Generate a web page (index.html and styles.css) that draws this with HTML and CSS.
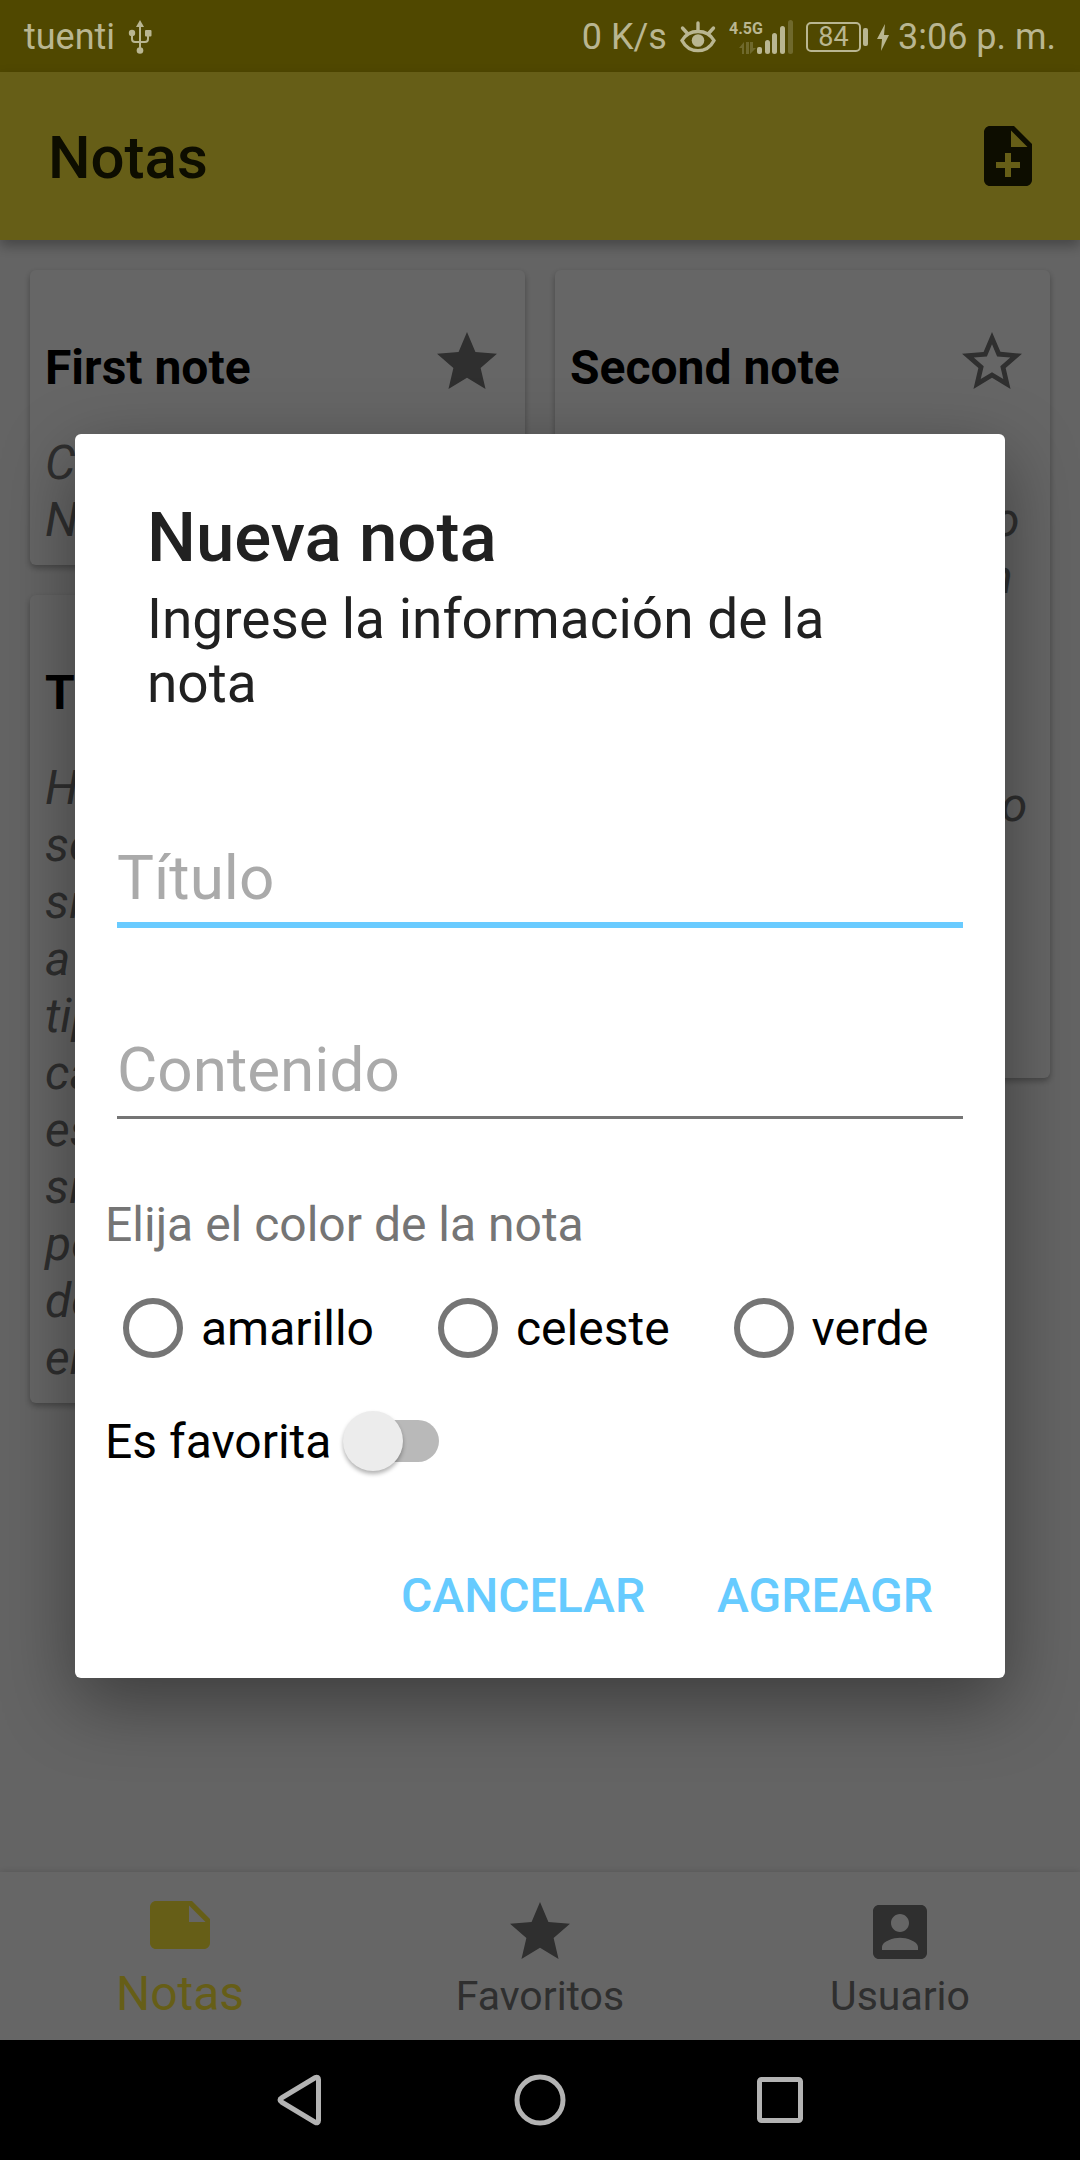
FILE: index.html
```html
<!DOCTYPE html>
<html lang="es">
<head>
<meta charset="utf-8">
<meta name="viewport" content="width=device-width, initial-scale=1">
<title>Notas</title>
<link rel="stylesheet" href="styles.css">
</head>
<body>
<div class="screen">
  <header class="status">
    <div class="status-group">
      <span>tuenti</span>
      <svg class="usb" viewBox="0 0 24 34" aria-hidden="true"><g fill="none" stroke="currentColor" stroke-width="2"><path d="M12 5v24M4 13v6c0 2 1 3 3 3h10c2 0 3-1 3-3v-6"/></g><path d="M12 0l4 7H8z"/><circle cx="4" cy="13" r="3.200"/><rect x="17" y="10" width="6.500" height="6.500" rx="1"/><circle cx="12" cy="30.500" r="3.300"/></svg>
    </div>
    <div class="status-group">
      <span>0 K/s</span>
      <svg class="eye" viewBox="0 0 36 32" aria-hidden="true"><g fill="none" stroke="currentColor" stroke-width="3.400" stroke-linecap="round"><path d="M2 19.500C9 7.500 27 7.500 34 19.500 27 33 9 33 2 19.500z"/><path d="M18 2v7M2.500 7l4.500 5M33.500 7L29 12"/></g><circle cx="18" cy="19.500" r="6.300"/></svg>
      <svg class="signal" viewBox="0 0 64 34" aria-hidden="true"><text x="0" y="14" class="signal-type">4.5G</text><g opacity=".3"><path d="M10 28l5-6v12h-2v-6zM17 22h3v12h-3zM21 22h3v6h3l-6 6z"/><rect x="59" y="0" width="5" height="34" rx="2.500"/></g><rect x="28" y="27" width="5" height="7" rx="2"/><rect x="36" y="20" width="5" height="14" rx="2.500"/><rect x="43" y="13" width="5" height="21" rx="2.500"/><rect x="51" y="6" width="5" height="28" rx="2.500"/></svg>
      <div class="power">
        <span class="battery"><span class="battery-body">84</span><span class="battery-tip"></span></span>
        <svg class="bolt" viewBox="0 0 12 27" aria-hidden="true"><path d="M8 0L0 15h5l-1 12 8-16H7z"/></svg>
        <span>3:06 p. m.</span>
      </div>
    </div>
  </header>

  <div class="app">
    <div class="appbar">
      <h1>Notas</h1>
      <button class="icon-button" type="button" aria-label="Agregar nota"><svg class="icon" viewBox="0 0 24 24"><path d="M14 2H6c-1.100 0-2 .9-2 2v16c0 1.100.9 2 2 2h12c1.100 0 2-.9 2-2V8l-6-6zm2 14h-3v3h-2v-3H8v-2h3v-3h2v3h3v2zm-3-7V3.500L18.500 9H13z"/></svg></button>
    </div>
    <main class="board">
      <div class="column">
        <article class="card">
          <div class="card-head"><h2>First note</h2><svg class="icon" viewBox="0 0 24 24"><path d="M12 17.270L18.180 21l-1.640-7.030L22 9.240l-7.190-.61L12 2 9.190 8.630 2 9.240l5.460 4.730L5.820 21z"/></svg></div>
          <p>Contenido<br>Nota</p>
        </article>
        <article class="card">
          <div class="card-head"><h2>Third note</h2></div>
          <p>Hay muchas<br>sesiones<br>sin texto<br>a la vista<br>tipo nota<br>cada una<br>es breve<br>sin más<br>pero útil<br>de leer<br>en casa</p>
        </article>
      </div>
      <div class="column">
        <article class="card">
          <div class="card-head"><h2>Second note</h2><svg class="icon" viewBox="0 0 24 24"><path d="M22 9.240l-7.190-.62L12 2 9.190 8.630 2 9.240l5.460 4.730L5.820 21 12 17.270 18.180 21l-1.630-7.030L22 9.240zM12 15.400l-3.760 2.270 1-4.280-3.320-2.880 4.380-.38L12 6.100l1.710 4.040 4.380.38-3.320 2.880 1 4.280L12 15.400z"/></svg></div>
          <p>Nota con<br>mucho con contenido<br>con toda información<br>para leer<br>luego y<br>guardar<br>como nuestro favorito<br>de uso<br>diario<br>en la<br>lista</p>
        </article>
      </div>
    </main>
    <nav class="tabs">
      <a class="tab active" href="#notas"><svg class="icon" viewBox="0 0 24 24"><path d="M22 10l-6-6H4c-1.100 0-2 .9-2 2v12c0 1.100.9 2 2 2h16c1.100 0 2-.9 2-2v-8zm-7-4.500l5.500 5.500H15V5.500z"/></svg><span>Notas</span></a>
      <a class="tab" href="#favoritos"><svg class="icon" viewBox="0 0 24 24"><path d="M12 17.270L18.180 21l-1.640-7.030L22 9.240l-7.190-.61L12 2 9.190 8.630 2 9.240l5.460 4.730L5.820 21z"/></svg><span>Favoritos</span></a>
      <a class="tab" href="#usuario"><svg class="icon" viewBox="0 0 24 24"><path d="M3 5v14c0 1.100.89 2 2 2h14c1.100 0 2-.9 2-2V5c0-1.100-.9-2-2-2H5c-1.110 0-2 .9-2 2zm12 4c0 1.660-1.340 3-3 3s-3-1.340-3-3 1.340-3 3-3 3 1.340 3 3zm-9 8c0-2 4-3.100 6-3.100s6 1.100 6 3.100v1H6v-1z"/></svg><span>Usuario</span></a>
    </nav>

    <div class="scrim">
      <form class="dialog" role="dialog" aria-labelledby="dialog-title">
        <div class="dialog-head">
          <h2 id="dialog-title">Nueva nota</h2>
          <p>Ingrese la información de la nota</p>
        </div>
        <div class="fields">
          <input class="field focused" type="text" placeholder="Título" aria-label="Título">
          <input class="field" type="text" placeholder="Contenido" aria-label="Contenido">
        </div>
        <fieldset class="colors">
          <legend>Elija el color de la nota</legend>
          <div class="radios">
            <label><input type="radio" name="color" value="amarillo">amarillo</label>
            <label><input type="radio" name="color" value="celeste">celeste</label>
            <label><input type="radio" name="color" value="verde">verde</label>
          </div>
        </fieldset>
        <label class="favorite">Es favorita<input class="switch" type="checkbox" role="switch"></label>
        <div class="actions">
          <button type="button">CANCELAR</button>
          <button type="button">AGREAGR</button>
        </div>
      </form>
    </div>
  </div>

  <footer class="system-nav">
    <button type="button" aria-label="Atrás"><svg viewBox="0 0 52 52"><path d="M41.500 3.500L7.500 24c-2 1-2 3 0 4l34 20.500c1.500.8 3 0 3-2v-41c0-2-1.500-2.800-3-2z"/></svg></button>
    <button type="button" aria-label="Inicio"><svg viewBox="0 0 52 52"><circle cx="26" cy="26" r="23"/></svg></button>
    <button type="button" aria-label="Recientes"><svg viewBox="0 0 52 52"><rect x="5.500" y="5.500" width="41" height="41" rx="2"/></svg></button>
  </footer>
</div>
</body>
</html>
```
FILE: styles.css
```css
* { box-sizing: border-box; }

body {
  margin: 0;
  font-family: Roboto, "Liberation Sans", sans-serif;
  font-size: 48px;
  line-height: 57px;
  background: #000;
}

h1, h2, p { margin: 0; }
svg { display: block; fill: currentColor; flex: none; }
button { margin: 0; padding: 0; border: 0; background: none; font: inherit; color: inherit; }

.screen { display: flex; flex-direction: column; min-height: 100vh; }

/* system status bar */
.status {
  display: flex;
  justify-content: space-between;
  align-items: center;
  height: 72px;
  padding: 2px 24px 0;
  background: #504800;
  color: #b9b691;
  font-size: 36px;
  line-height: 42px;
}
.status-group { display: flex; align-items: center; gap: 13px; }
.power { display: flex; align-items: center; gap: 9px; }
.usb { width: 24px; height: 34px; }
.eye { width: 36px; height: 32px; }
.signal { width: 64px; height: 34px; }
.signal-type { font: bold 16px Roboto, sans-serif; }
.battery { display: flex; align-items: center; gap: 2px; }
.battery-body {
  width: 55px;
  height: 30px;
  border: 2px solid currentColor;
  border-radius: 5px;
  font-size: 27px;
  line-height: 27px;
  text-align: center;
}
.battery-tip { width: 5px; height: 18px; border-radius: 2px; background: currentColor; }
.bolt { width: 12px; height: 27px; }

/* app */
.app { position: relative; flex: 1; display: flex; flex-direction: column; background: #fafafa; }
.appbar {
  display: flex;
  justify-content: space-between;
  align-items: center;
  height: 168px;
  padding: 0 36px 0 48px;
  background: #ffeb3b;
  color: #212100;
  box-shadow: 0 6px 12px rgba(0, 0, 0, .3);
}
.appbar h1 { padding-top: 4px; font-size: 60px; font-weight: 500; line-height: 72px; }
.icon { width: 72px; height: 72px; }

.board {
  flex: 1;
  display: grid;
  grid-template-columns: repeat(2, minmax(0, 1fr));
  gap: 30px;
  padding: 30px;
  align-items: start;
}
.column { display: grid; grid-template-columns: minmax(0, 1fr); gap: 30px; }
.card {
  padding: 45px 22px 17px 15px;
  border-radius: 6px;
  background: #fff;
  color: #757575;
  box-shadow: 0 3px 6px rgba(0, 0, 0, .3);
}
.card-head { display: flex; justify-content: space-between; height: 119px; padding-top: 11px; }
.card h2 { padding-top: 13px; color: #000; font-size: 48px; line-height: 57px; }
.card p { font-style: italic; white-space: nowrap; }

.tabs {
  display: grid;
  grid-template-columns: repeat(3, 1fr);
  height: 168px;
  background: #fff;
  box-shadow: 0 -1px 6px rgba(0, 0, 0, .12);
}
.tab {
  display: flex;
  flex-direction: column;
  align-items: center;
  justify-content: flex-end;
  gap: 4px;
  padding-bottom: 20px;
  color: #757575;
  font-size: 41px;
  line-height: 48px;
  text-decoration: none;
}
.tab.active { padding-bottom: 18px; color: #ffeb3b; font-size: 48px; line-height: 57px; }

/* dialog */
.scrim {
  position: absolute;
  inset: 0;
  display: flex;
  align-items: center;
  padding: 0 75px;
  background: rgba(0, 0, 0, .6);
}
.dialog {
  flex: 1;
  padding: 57px 30px 12px;
  border-radius: 6px;
  background: #fff;
  color: #000;
  box-shadow: 0 24px 72px rgba(0, 0, 0, .4);
}
.dialog-head { padding: 0 42px; color: #212121; }
.dialog-head h2 { font-size: 69px; font-weight: 500; line-height: 94px; }
.dialog-head p { padding-top: 2px; font-size: 55px; line-height: 64px; }
.fields { display: grid; gap: 60px; padding: 82px 12px 0; }
.field {
  width: 100%;
  height: 131px;
  padding: 35px 0 0;
  border: 0;
  border-bottom: 3px solid #757575;
  border-radius: 0;
  outline: 0;
  background: none;
  font: inherit;
  font-size: 62px;
}
.field::placeholder { color: #aaa; opacity: 1; }
.field.focused { border-bottom: 6px solid #69cbff; }
.colors { margin: 0; padding: 0; border: 0; }
.colors legend { padding: 77px 0 0; color: #757575; }
.radios { display: flex; gap: 64px; padding: 45px 18px 0; }
.radios label { display: flex; align-items: center; gap: 18px; }
.radios input {
  appearance: none;
  width: 60px;
  height: 60px;
  margin: 0;
  border: 6px solid #757575;
  border-radius: 50%;
}
.favorite { display: flex; align-items: center; gap: 12px; padding-top: 53px; }
.switch {
  appearance: none;
  display: flex;
  align-items: center;
  width: 96px;
  height: 60px;
  margin: 0;
}
.switch::before {
  content: "";
  width: 60px;
  height: 60px;
  border-radius: 50%;
  background: #ececec;
  box-shadow: 0 3px 4px rgba(0, 0, 0, .3);
  z-index: 1;
}
.switch::after {
  content: "";
  width: 66px;
  height: 42px;
  margin-left: -30px;
  border-radius: 0 21px 21px 0;
  background: #b9b9b9;
}
.actions {
  display: flex;
  justify-content: flex-end;
  gap: 24px;
  padding: 54px 18px 0 0;
  color: #66cbff;
}
.actions button { padding: 42px 24px; font-weight: 500; }

/* system navigation */
.system-nav {
  display: flex;
  justify-content: center;
  align-items: center;
  gap: 188px;
  height: 120px;
  background: #000;
  color: #b3b3b3;
}
.system-nav svg { width: 52px; height: 52px; fill: none; stroke: currentColor; stroke-width: 5; }
```
